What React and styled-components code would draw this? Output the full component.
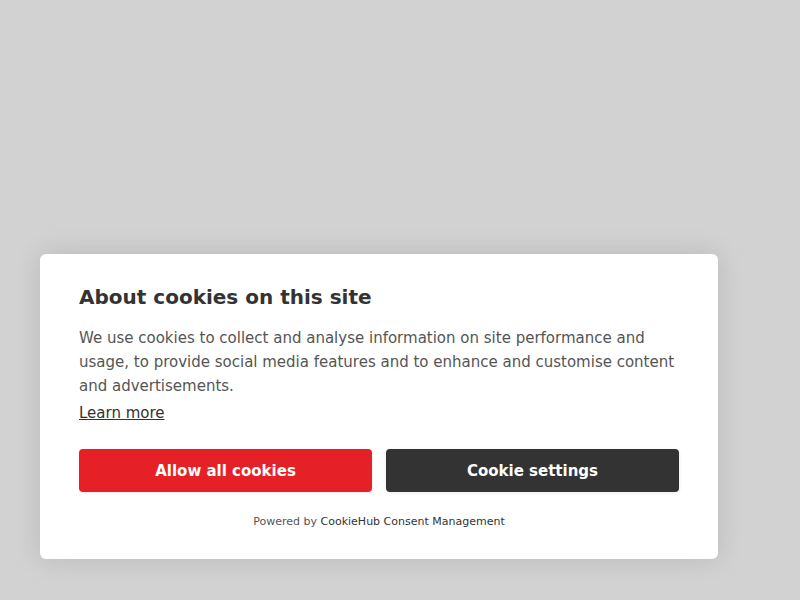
import React from "react";
import styled, { createGlobalStyle } from "styled-components";

const Global = createGlobalStyle`
  html, body { margin: 0; padding: 0; }
  body {
    background: #d2d2d2;
    font-family: "DejaVu Sans", Verdana, sans-serif;
    height: 600px;
    overflow: hidden;
  }
`;

const Page = styled.div`
  height: 600px;
  display: flex;
  align-items: flex-end;
  padding: 0 0 41px 40px;
  box-sizing: border-box;
`;

const Dialog = styled.div`
  width: 678px;
  box-sizing: border-box;
  background: #fff;
  border-radius: 6px;
  box-shadow: 0 0 28px rgba(0, 0, 0, 0.12);
  padding: 32px 39px 30px;
`;

const Title = styled.h2`
  margin: 0 0 17px;
  font-size: 20px;
  font-weight: bold;
  line-height: 23px;
  color: #333;
`;

const Text = styled.p`
  margin: 0;
  font-size: 15px;
  line-height: 24px;
  color: #555;
`;

const LearnMore = styled.a`
  display: inline-block;
  margin-top: 3px;
  font-size: 15px;
  line-height: 24px;
  color: #333;
  text-decoration: underline;
  cursor: pointer;
`;

const Actions = styled.div`
  display: flex;
  gap: 14px;
  margin-top: 24px;
`;

const Button = styled.button`
  flex: 1;
  height: 43px;
  border: none;
  border-radius: 4px;
  background: ${(p) => (p.$primary ? "#e52027" : "#333333")};
  color: #fff;
  font-family: inherit;
  font-size: 15px;
  font-weight: bold;
  box-shadow: 0 1px 4px rgba(0, 0, 0, 0.08);
  cursor: pointer;
`;

const Footer = styled.div`
  margin-top: 22px;
  text-align: center;
  font-size: 11px;
  line-height: 15px;
  color: #555;

  span {
    color: #333;
  }
`;

export default function App() {
  return (
    <>
      <Global />
      <Page>
        <Dialog>
          <Title>About cookies on this site</Title>
          <Text>
            We use cookies to collect and analyse information on site performance and
            usage, to provide social media features and to enhance and customise content
            and advertisements.
          </Text>
          <LearnMore>Learn more</LearnMore>
          <Actions>
            <Button $primary>Allow all cookies</Button>
            <Button>Cookie settings</Button>
          </Actions>
          <Footer>
            Powered by <span>CookieHub Consent Management</span>
          </Footer>
        </Dialog>
      </Page>
    </>
  );
}
